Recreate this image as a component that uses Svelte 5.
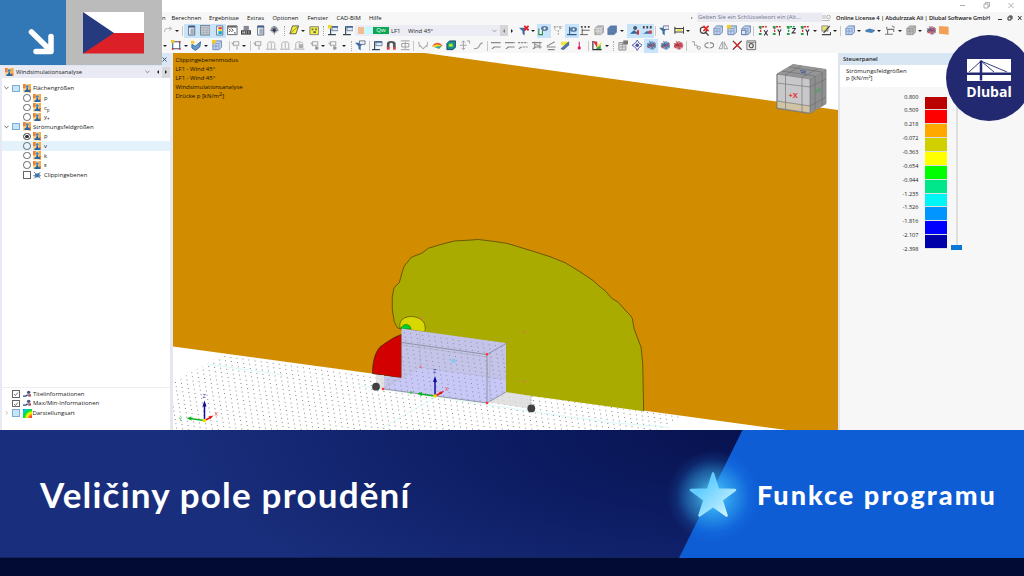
<script>
  const row1 = [
    ['redo', 168], ['caret', 177], ['sep', 182], ['panel', 191, 1], ['table', 205, 1], ['color', 219, 1], ['console', 232.5], ['rec', 246], ['panel', 260], ['globe', 274], ['dots', 285],
    ['shape', 294], ['caret', 303.5], ['ygrid', 314], ['dots', 324], ['flag', 333], ['frame', 348], ['combo', 431.5], ['arrow', 512],
    ['filterx', 524], ['caret', 533], ['eyeg', 543.8, 1], ['forces', 558], ['eyeb', 572, 1], ['load', 585], ['cubeg', 599], ['cubeb', 612], ['caret', 622],
    ['person', 634, 1], ['values', 647.7, 1], ['sep', 656], ['key', 664], ['dims', 679], ['caret', 688], ['zoomx', 704], ['box', 718], ['boxy', 732], ['boxes', 746], ['sep', 754],
    ['axx', 763], ['axy', 777], ['axz', 791], ['axm', 805], ['caret', 815], ['clip', 826], ['caret', 835.5], ['sep', 841],
    ['layers', 850], ['caret', 859], ['slab', 870], ['caret', 879.5], ['beam', 890], ['caret', 900], ['wall', 911], ['caret', 920], ['mesh', 931], ['orange', 944]
  ];
  const row2 = [
    ['caret', 165], ['select', 176], ['caret', 186], ['surf', 196], ['caret', 206], ['boxy', 217], ['sep', 229], ['pin', 235.5], ['caret', 244], ['sep', 250],
    ['pin', 257], ['sup', 271.5], ['sup', 285], ['supb', 299.5], ['pinb', 314], ['caret', 323], ['pinb', 332], ['caret', 344], ['dots', 351],
    ['filter', 360.5], ['sep', 369], ['frame', 377.5], ['magnet', 391.5], ['compress', 405], ['sep', 413.5], ['vee', 423], ['rain', 437.5], ['cubec', 451], ['updown', 464.5], ['line', 478.5], ['sep', 487],
    ['diag', 496], ['diag', 510], ['diagd', 523.5], ['diagx', 537.5], ['diagl', 551], ['brush', 565], ['drop', 579], ['sep', 588], ['chart', 597], ['caret', 606.5], ['dots', 613],
    ['report', 623], ['target', 637], ['mesh2', 651, 1], ['mesh2', 665], ['meshr', 678.5], ['sep', 687], ['steps', 696], ['rotate', 709.5], ['mirror', 723], ['cross', 737.5], ['camera', 751.5]
  ];
  function place(list) {
    let end = 162;
    return list.map(([kind, c, on]) => {
      const w = kind === 'combo' ? 153 : kind === 'caret' ? 4 : kind === 'sep' || kind === 'dots' ? 2 : kind === 'arrow' ? 3 : on ? 13.6 : 10;
      const m = c - w / 2 - end;
      end = c + w / 2;
      return { kind, w, m, on };
    });
  }
  const bars = [place(row1), place(row2)];
  const menu = ['Berechnen', 'Ergebnisse', 'Extras', 'Optionen', 'Fenster', 'CAD-BIM', 'Hilfe'];
  const menuW = [37.5, 38, 25.5, 35, 29, 32.5, 20];
  const tree = [
    { t: 'Flächengrößen', g: 1 }, { t: 'p' }, { t: 'c', s: 'p' }, { t: 'y', s: '+' },
    { t: 'Strömungsfeldgrößen', g: 1 }, { t: 'p', sel: 1 }, { t: 'v', hl: 1 }, { t: 'k' }, { t: 'ε' }
  ];
  const titles = ['Clippingebenenmodus', 'LF1 - Wind 45°', 'LF1 - Wind 45°', 'Windsimulationsanalyse'];
  const scale = ['0.800', '0.509', '0.218', '-0.072', '-0.363', '-0.654', '-0.944', '-1.235', '-1.526', '-1.816', '-2.107', '-2.398'];
  const colors = ['#bb0000', '#ff0000', '#ffa800', '#d0d000', '#ffff00', '#00ff00', '#00e68a', '#00f5f5', '#0095ff', '#0000ff', '#0000a8'];
  let floor = '';
  for (let a = -30; a < 95; a++) {
    for (let b = -30; b < 60; b++) {
      const x = 175 + 6.05 * a + 5.4 * b;
      const y = 382 + 0.86 * a - 3.35 * b;
      if (x > 172 && x < 690 && y > 320 && y < 431) floor += `M${x.toFixed(1)} ${y.toFixed(1)}h1v1h-1z`;
    }
  }
  const contour = 'M643.7 411.300 642.700 363 641 347 638.300 340 634 328.300 632.300 318.300 630 315 625 310 618.300 302.300 611.700 298.300 605 290.700 599 286 593.300 280.700 578.300 270.700 565 262.700 550 256.700 533.300 251.300 506.700 243.300 493.300 241.300 478.300 239.500 466.700 240.300 454.300 241 440 244.700 428.300 248.300 421.700 253.300 411.700 257 404.300 266 402.300 271.700 399.300 282.700 394 287.700 392.300 296.700 392.300 310 394.300 321.700 397.300 327.700 401.500 329.300';
</script>

{#snippet wind()}
  <svg class="wind" viewBox="0 0 9 9"><rect width="9" height="9" fill="#f9d489" /><path d="M0 0h2.800v4.500H0zM6.200 5H9v4H6.200z" fill="#f08038" /><path d="M6.200 0H9v5H6.200z" fill="#f6ab4a" /><path d="M1.500 8.500V7l1.700-.6.8-2.400h1l.8 2.400 1.700.6v1.500z" fill="#2467a8" /><circle cx="4.500" cy="2.700" r="1.500" fill="#3f86bd" /></svg>
{/snippet}

{#snippet icon(k)}
  <svg viewBox="0 0 12 12" class="ic">
    {#if k === 'redo'}<path d="M2 8V6q0-2 3-2h4M7 2l3 2-3 3" fill="none" stroke="#aaa" />
    {:else if k === 'panel'}<path d="M3 1h7v10.500H3z" fill="#fff" stroke="#4e5d78" /><path d="M3 1h7v2H3z" fill="#405d8d" /><path d="M5 4h4v7H5z" fill="#a2adbd" />
    {:else if k === 'table'}<path d="M.5.500h11v11H.5z" fill="#c4cad3" stroke="#6f7781" /><path d="M1 3h10M1 6h10M1 8.500h10M4 3v8M8 3v8" stroke="#9ba3ac" stroke-width=".6" />
    {:else if k === 'color'}<path d="M3 1h7v10.500H3z" fill="#fff" stroke="#59687e" /><path d="M5 2.500h4V5H5z" fill="#e43b2c" /><path d="M5 5h4v2H5z" fill="#eee321" /><path d="M5 7h4v3.500H5z" fill="#13a9d6" />
    {:else if k === 'console'}<path d="M.5 1h11v10H.5z" fill="#fff" stroke="#555" /><path d="M1 1h10v2H1z" fill="#666" /><path d="m2 4 2 2-2 2m3-4 2 2-2 2m3 1h2" fill="none" stroke="#333" />
    {:else if k === 'rec'}<path d="M3 1h6v5H3z" fill="#889" /><path d="M0 6h12v5H0z" fill="#444" /><path d="M2 7v3m2-3v3M2 8.500h2M6 7v3m3-3v3" stroke="#eee" stroke-width=".7" />
    {:else if k === 'globe'}<circle cx="6" cy="5" r="4" fill="#a5acb3" /><path d="M1 6h10M6 1v10M3 4h6" stroke="#666f78" /><circle cx="6" cy="6" r="1.800" fill="#334" />
    {:else if k === 'shape'}<path d="M4 1h7L8 10H1z" fill="#f6ef28" stroke="#555" /><path d="M1 10 11 1" stroke="#666" stroke-width=".8" />
    {:else if k === 'ygrid'}<path d="M1 2h10v9H1z" fill="#f4ee3a" stroke="#777" /><path d="M3 4h2v2H3zm4 0h2v2H7zM5 7h3v2H5z" fill="#666" />
    {:else if k === 'flag' || k === 'frame'}<path d="M3 11V2h8M0 11h9" fill="none" stroke="#34475d" stroke-width="1.300" /><path d="M4.500 2h7v4.500h-7z" fill="#dfe7f2" stroke="#4b658c" stroke-width=".8" /><path d="M4.500 1.500h7v1.500h-7z" fill="#375f99" />{#if k === 'flag'}<path d="M0 0h4v4H0z" fill="#f4d51b" />{/if}
    {:else if k === 'filter' || k === 'filterx' || k === 'key'}<path d="M0 3h10L6.500 7v5L4 10V7z" fill="#3c6eaa" />{#if k === 'filterx'}<path d="m6 1 5 5m0-5-5 5" stroke="#e22129" stroke-width="2.200" />{:else}<path d="M5 1h6.500v4H5z" fill="#eef" stroke="#456" stroke-width=".8" />{/if}
    {:else if k === 'eyeg'}<path d="M1 4v7h4V6" fill="#fff" stroke="#278750" stroke-width="1.300" /><ellipse cx="7.500" cy="4" rx="4" ry="2.800" fill="#5b7599" /><circle cx="7.500" cy="4" r="1.300" fill="#dff" />
    {:else if k === 'eyeb'}<path d="M3 11V2M0 11h11" stroke="#345a86" stroke-width="1.300" /><ellipse cx="7.500" cy="5" rx="4" ry="2.800" fill="#53749d" /><circle cx="7.500" cy="5" r="1.200" fill="#dff" />
    {:else if k === 'forces'}<path d="M1 2h10M2 2v3l2 2m4-5v3l2-2M6 6v5" fill="none" stroke="#888" stroke-dasharray="2 1" />
    {:else if k === 'load'}<path d="M2.500 4v7M0 11h9M2 6h9" stroke="#555" fill="none" /><path d="M1 1h2v2H1zm4 0h2v2H5zm4 0h2v2H9z" fill="#444" />
    {:else if k === 'cubeg' || k === 'cubeb' || k === 'box' || k === 'boxy' || k === 'boxes' || k === 'layers' || k === 'wall'}
      <path d="m1 4 3-3h7v7l-3 3H1z" fill={k === 'cubeg' || k === 'wall' ? '#bbb' : k === 'cubeb' ? '#5278a7' : '#c2d3ed'} stroke={k === 'cubeg' || k === 'wall' ? '#999' : '#6685b4'} /><path d="M1 4h7v7m0-7 3-3M4.500 4v7M1 7h7" fill="none" stroke={k === 'cubeg' ? '#eee' : k === 'wall' ? '#888' : '#6f8dba'} stroke-width=".7" />{#if k === 'boxy'}<path d="M0 0h4.500v4H0z" fill="#f3cc2c" />{/if}{#if k === 'boxes'}<path d="M.5 6h5v5h-5z" fill="#dfe8f7" stroke="#556fa3" />{/if}
    {:else if k === 'person'}<path d="M0 10c3 0 3-3 6-4l5 4z" fill="#3164a3" /><circle cx="7" cy="3.500" r="2.300" fill="#4e5870" /><path d="M9 6h3v5H9z" fill="#d93131" />
    {:else if k === 'values'}<path d="M1 1h2v3H1zm4 0h2v3H5zm4 0h2v3H9z" fill="#444" /><path d="M0 10q3 0 5-3h6v3z" fill="#3e6ba5" /><circle cx="9.500" cy="8" r="2" fill="#db4646" />
    {:else if k === 'dims'}<path d="M1 2v8m10-8v8M1 4h10M1 8h10" stroke="#444" stroke-width="1.300" /><path d="M3 5h6v2H3z" fill="#eadc38" />
    {:else if k === 'zoomx'}<circle cx="5" cy="6" r="3.500" fill="#fff" stroke="#444" stroke-width="1.400" /><path d="m7 8 4 4" stroke="#444" stroke-width="1.600" /><path d="m5 1 6 6m0-6L5 7" stroke="#e52a2a" stroke-width="2" />
    {:else if k === 'axx' || k === 'axy' || k === 'axz' || k === 'axm'}<path d="M3 2v9M1 2h9" fill="none" stroke={k === 'axz' ? '#239c46' : '#d62f2f'} stroke-width="1.500" stroke-dasharray="2.500 1" /><path d="M1 1h3v3H1zM1 9h3v2.500H1z" fill="#249f4b" /><path d={k === 'axx' ? 'm7 6 4 6m0-6-4 6' : k === 'axz' ? 'M7 4h4L7 9h4' : 'm6.500 5 2 3 2-3M8.500 8v4'} fill="none" stroke="#334" stroke-width="1.200" />
    {:else if k === 'clip'}<path d="M1 1h7v6H1z" fill="#e7e36c" stroke="#889" /><path d="m3 9 7-8M1 11h10V8" fill="none" stroke="#444" stroke-width="1.400" />
    {:else if k === 'slab'}<path d="m0 6 5-2 7 2-4 3-7-1z" fill="#4982b4" />
    {:else if k === 'beam'}<path d="M0 10.500h9M3 10V5h7v3M2 2v3M8 1l3 2" fill="none" stroke="#777" stroke-width="1.200" />
    {:else if k === 'mesh' || k === 'mesh2' || k === 'meshr'}<path d="m2 4 5-3 4 3v5l-5 2-5-3z" fill={k === 'mesh2' ? '#7c9fc6' : '#cf7f92'} /><path d="m1 4 10 4M1 8l9-5M4 1l4 10M1 6h11" stroke={k === 'meshr' ? '#a22' : '#395d87'} stroke-width=".8" /><path d="M2 9l9-5" stroke="#db3a43" />
    {:else if k === 'orange'}<path d="m0 1 11 1v9L0 10z" fill="#f3a057" />
    {:else if k === 'select'}<path d="M2 2h8v8H2z" fill="#fff" stroke="#345a8b" stroke-width="1.200" /><path d="M9 1h2v2H9zM1 9h2v2H1zm8 0h2v2H9z" fill="#d33" /><path d="M0 0h4v3.500H0z" fill="#f0c92b" />
    {:else if k === 'surf'}<path d="m1 5 4 2 6-5-1 6-5 4-4-3z" fill="#5f9ccc" stroke="#386493" /><path d="M0 1h4v3H0z" fill="#f3cd1d" />
    {:else if k === 'pin' || k === 'pinb'}<path d="M4 2h6v4H4zM8 6v5M2 3l3 4" fill="none" stroke="#aaa" stroke-width="1.200" />{#if k === 'pinb'}<circle cx="9" cy="9" r="2" fill="#999" />{/if}
    {:else if k === 'sup' || k === 'supb'}<path d="M2 10V4q0-2 4-2t4 2v6M6 3v7M0 10.500h12" fill="none" stroke="#aaa" />{#if k === 'supb'}<circle cx="8" cy="7" r="2.300" fill="#aaa" />{/if}
    {:else if k === 'magnet'}<path d="M1 10V4q0-3 5-3t5 3v6H8V5q0-2-2-2T4 5v5z" fill="#555" /><path d="M1 8h3v3H1zm7 0h3v3H8z" fill="#d44" />
    {:else if k === 'compress'}<path d="M1 1h10M1 11h10M2 4h8v4H2zM6 2v8" fill="none" stroke="#999" />
    {:else if k === 'vee'}<path d="M1 2v3l5 5 5-5V2M1 8l2-2m8 2L9 6" fill="none" stroke="#aaa" stroke-width="1.200" />
    {:else if k === 'rain'}<path d="M0 7q5-7 12-1L8 10z" fill="#e85a32" /><path d="M0 7q6-4 12 0l-4 3z" fill="#f2d82c" /><path d="M3 8l8-1.500L8 10z" fill="#20a8c1" />
    {:else if k === 'cubec'}<path d="m1 4 3-3h7v7l-3 3H1z" fill="#188b94" stroke="#194466" /><path d="M3 4h5v4H3z" fill="#53d53b" /><path d="M4 5h3v2H4z" fill="#f9df22" />
    {:else if k === 'updown'}<path d="M5 1v10M3 3l2-2 2 2M3 9l2 2 2-2M1 6h8m0-5h3v3" fill="none" stroke="#999" />
    {:else if k === 'line'}<path d="M1 10q5 0 6-3t4-4" fill="none" stroke="#999" stroke-width="1.400" />
    {:else if k === 'diag' || k === 'diagd' || k === 'diagx' || k === 'diagl'}<path d={k === 'diagl' ? 'M1 8h10M1 7l9-5M2 11h8' : 'M0 3h11M2 9l2-1h7M1 10l3-2'} fill="none" stroke="#888" stroke-width="1.300" stroke-dasharray={k === 'diagd' ? '2.500 1' : 'none'} />{#if k === 'diagx'}<path d="M3 2v8m6-8v8M3 5l6 2" stroke="#888" />{/if}
    {:else if k === 'brush'}<path d="M1 2h9v4H1z" fill="#f0e63b" /><path d="m1 10 9-8v4L4 11z" fill="#5277b9" stroke="#345" stroke-width=".6" />
    {:else if k === 'drop'}<path d="M5.300 2h1.500v6H5.300z" fill="#dc4b98" /><circle cx="6" cy="9" r="1.800" fill="#dc174f" />
    {:else if k === 'chart'}<path d="m1 1 5 8V2z" fill="#df3137" /><path d="m4 9 7-7-1 5z" fill="#e7df35" /><path d="m5 9 5-3v5H5z" fill="#3caa56" /><path d="M1 1v10h10" fill="none" stroke="#333" stroke-width="1.300" />
    {:else if k === 'report'}<path d="M1 3h8v8.500H1z" fill="#ddd" stroke="#888" /><path d="M2 5h6M2 8h6M5 3v8" stroke="#888" stroke-width=".7" /><path d="M6 .5h6V5H6z" fill="#777" />
    {:else if k === 'target'}<path d="m6 0 2 3.500L12 6 8 8.500 6 12 4 8.500 0 6l4-2.500z" fill="#f6f7ff" stroke="#484fa0" /><circle cx="6" cy="6" r="2" fill="#4b4e91" />
    {:else if k === 'steps'}<path d="M1 2h3v4h3v3" fill="none" stroke="#999" /><circle cx="9" cy="9" r="1.700" fill="none" stroke="#999" />
    {:else if k === 'rotate'}<ellipse cx="6" cy="6" rx="5" ry="3" fill="none" stroke="#888" stroke-width="1.200" /><path d="M6 1v10" stroke="#f8f8f8" stroke-width="1.500" />
    {:else if k === 'mirror'}<path d="M5 2v8H1zM7 2v8h4z" fill="none" stroke="#999" />
    {:else if k === 'cross'}<path d="m1 1 10 10M11 1 1 11" stroke="#333" stroke-width="1.300" /><path d="m2.500 2.500 7 7m0-7-7 7" stroke="#e12222" stroke-width="1.300" />
    {:else if k === 'camera'}<path d="M1 1h10v10H1z" fill="#eee" stroke="#666" /><circle cx="6" cy="6.500" r="2.300" fill="none" stroke="#555" stroke-width="1.300" /><path d="M2 3h8" stroke="#777" />
    {/if}
  </svg>
{/snippet}

<main>
  <section class="app">
    <div class="titlebar"><svg width="54" height="10" viewBox="0 0 54 10"><path d="M0 5.500h5M24 4h4v4h-4zM25.500 4V2.500h4v4H28M48.500 3l5 5m0-5-5 5" fill="none" stroke="#999" stroke-width=".8" /></svg></div>
    <div class="menubar">
      <span class="clipn">n</span>
      {#each menu as m, i}<span class="mi" style:width={menuW[i] + 'px'}>{m}</span>{/each}
      <div class="search"><i></i><span>Geben Sie ein Schlüsselwort ein (Alt...</span></div>
      <svg class="find" viewBox="0 0 10 8"><path d="M0 2h4M0 4h4M0 6.500h8" stroke="#aaa" stroke-width=".8" /><circle cx="6.500" cy="3" r="1.800" fill="none" stroke="#999" stroke-width=".7" /></svg>
      <b class="license">Online License 4 | Abdulrzzak Ali | Dlubal Software GmbH</b>
      <svg class="wctl" viewBox="0 0 26 8"><path d="M1 5.500h4M11 3h3v3h-3zM12 2h3v3M21 2l3.500 4m0-4L21 6" fill="none" stroke="#333" /></svg>
    </div>
    {#each bars as bar}
      <div class="toolbar">
        {#each bar as b}
          <div class="slot" class:on={b.on} style:width={b.w + 'px'} style:margin-left={b.m + 'px'}>
            {#if b.kind === 'combo'}
              <div class="combo"><i class="sw1"></i><i class="sw2"></i><em>Qw</em><span class="lf">LF1</span><span>Wind 45°</span><svg class="chev" viewBox="0 0 6 4"><path d="m.5.500 2.500 2.500L5.500.5" fill="none" stroke="#777" stroke-width=".8" /></svg><u class="prev"><i class="tri back"></i></u></div>
            {:else if b.kind === 'caret'}<i class="caret"></i>
            {:else if b.kind === 'sep'}<i class="sep"></i>
            {:else if b.kind === 'dots'}<i class="sep dotted"></i>
            {:else if b.kind === 'arrow'}<i class="tri"></i>
            {:else}{@render icon(b.kind)}{/if}
          </div>
        {/each}
      </div>
    {/each}
    <div class="work">
      <aside class="nav">
        <div class="navhead"><svg viewBox="0 0 5 5"><path d="m.5.500 4 4m0-4-4 4" stroke="#345" stroke-width=".9" /></svg></div>
        <div class="picker">{@render wind()}<span>Windsimulationsanalyse</span><svg class="chev" viewBox="0 0 6 4"><path d="m.5.500 2.500 2.500L5.500.5" fill="none" stroke="#666" stroke-width=".9" /></svg><i class="tri left"></i><u><i class="tri"></i></u></div>
        <div class="tree">
          {#each tree as n}
            <div class="node" class:group={n.g} class:hl={n.hl}>
              {#if n.g}<svg class="exp" viewBox="0 0 6 4"><path d="m.5.500 2.500 2.500L5.500.5" fill="none" stroke="#444" /></svg><i class="box blue"></i>{:else}<i class="radio" class:sel={n.sel}></i>{/if}
              {@render wind()}<span>{n.t}{#if n.s}<sub>{n.s}</sub>{/if}</span>
            </div>
          {/each}
          <div class="node"><i class="box"></i><svg class="wind" viewBox="0 0 9 9"><path d="m2 3 5-1v4.500L2 7z" fill="#4b7fb3" /><path d="m1 1 7 7M1 8l7-7M0 5h9" stroke="#4c7299" stroke-width=".8" /></svg><span>Clippingebenen</span></div>
        </div>
        <div class="options">
          {#each ['Titelinformationen', 'Max/Min-Informationen'] as t}
            <div class="node opt"><i class="box"><svg viewBox="0 0 8 8"><path d="m1.500 4 1.800 2L6.500 2" fill="none" stroke="#333" stroke-width=".9" /></svg></i><svg class="wind" viewBox="0 0 9 9"><path d="M0 6.500h3L5 5" fill="none" stroke="#254c8a" stroke-width="1.500" /><circle cx="6" cy="2.500" r="1.800" fill="#4b5380" /><path d="M5.500 4.500h3.500v2.500H5.500z" fill="#b8475a" /></svg><span>{t}</span></div>
          {/each}
          <div class="node group"><svg class="exp" viewBox="0 0 6 6"><path d="M2 .5 4.500 3 2 5.500" fill="none" stroke="#888" stroke-width=".9" /></svg><i class="box blue"></i><i class="rainbow"></i><span>Darstellungsart</span></div>
        </div>
      </aside>
      <div class="view">
        <svg viewBox="173 53 665 377" width="665" height="377">
          <defs>
            <clipPath id="ground"><path d="M173 383 224 353.500 683 417 664 430H173z" /></clipPath>
            <clipPath id="solid"><path d="M401.500 328.500 506 343v49l-19 11-103-14v-13l17.500 2z" /></clipPath>
          </defs>
          <path d="M173 53H425L838 110V437L173 346.500z" fill="#d18c00" />
          <path d={floor} fill="#8a8a8a" clip-path="url(#ground)" />
          <path d="m207 364 76 11M380 429l56-32 120 18 60 8 50 4M361 386l75 11" stroke="#d3f5f5" stroke-width=".8" fill="none" />
          <path d="{contour}V378z" fill="#aaab00" />
          <path d={contour} fill="none" stroke="#554800" stroke-width=".8" stroke-linejoin="round" />
          <path d="M400 328c-3-16 24-14 25-2q1 6-2 6z" fill="#d8d800" stroke="#574b00" stroke-width=".7" /><path d="M401 329q1-5 6-4.500 4 1 4 4.500z" fill="#00d22c" stroke="#266100" stroke-width=".5" />
          <path d="M401.500 334.500c-9 3-15 8-21 12-6 6-8 17-8 27l29 4.500z" fill="#d20000" stroke="#402500" stroke-width=".7" />
          <path d="M376 375h8v14l-8-1zM487 402l19-10 25 4v13z" fill="#d9d9d9" opacity=".8" />
          <path d="M401.500 328.500 506 343v49l-19 11-103-14v-13l17.500 2z" fill="#c4c4e8" />
          <path d="m383 389 37-23 86 12v14l-19 11z" fill="#c8c8f6" />
          <path d={floor} fill="#8c8cb0" clip-path="url(#solid)" />
          <path d="m401.500 342.500 85.500 12 19-11M487 354v49l19-11M487 403l-103-14" fill="none" stroke="#777b87" stroke-width=".7" />
          <path d="m383 389 37-22 86 12M420 331v36M401.500 345l85.500 12M490 355v47" fill="none" stroke="#aaa9b9" stroke-width=".5" /><path d="M531 396v12" stroke="#999" stroke-width=".7" stroke-dasharray="2 1" />
          <g fill="#f33"><circle cx="487" cy="354.300" r="1.300" /><circle cx="487" cy="403" r="1.300" /><circle cx="383" cy="389" r="1.300" /></g>
          <g fill="#f45d74"><circle cx="420.500" cy="318.500" r="1" /><circle cx="524" cy="332.500" r="1" /><circle cx="524" cy="381.500" r="1" /><circle cx="420.500" cy="367" r="1" /></g>
          <circle cx="453.500" cy="361" r="2.300" fill="#8ec6f4" /><circle cx="376" cy="386.700" r="3.900" fill="#414141" /><circle cx="531.300" cy="408.400" r="3.900" fill="#414141" />
          {#each [{ x: 435, y: 396 }, { x: 204.5, y: 420.5, yl: 1 }] as a}
            <g transform="translate({a.x} {a.y})"><path d="M0 0v-17" stroke="#100c9c" stroke-width="1.500" /><path d="m-2-14 2-6 2 6z" fill="#100c9c" /><path d="m0 0-15-2" stroke="#0cb51f" stroke-width="1.300" /><path d="m-13-4-5 1.700 5 2.300z" fill="#0cb51f" /><path d="m0 0 6-3" stroke="#e11" stroke-width="1.500" /><path d="m4-4 5-1-3 3.500z" fill="#e11" /><circle r="1.800" fill="#f9d900" /><text x="-2" y="-23" fill="#3530a0">Z</text><text x="10" y="-5" fill="#e44">X</text>{#if a.yl}<text x="-26" y="0" fill="#16b72c">Y</text>{:else}<circle cx="-24" cy="-3.500" r="1.300" fill="#3cc24a" />{/if}</g>
          {/each}
          <path d="m777 74 16-9.500 33 5v34l-16 10-33-5z" fill="#c8c8ca" stroke="#777" stroke-width=".8" /><path d="m777 74 16-9.500 33 5-16 9z" fill="#969698" /><path d="m810 79 16-9v34l-16 9z" fill="#8e8e8e" /><path d="m777 101 33 5v7l-33-5z" fill="#d0c3a6" />
          <path d="m777 74 33 5v34l-33-5zM810 79l16-9M785.500 75v34M802 77.500v35M777 83l33 4M777 101l33 5M815 76v34M822 72v34M810 87l16-8M810 106l16-9M785 75l16-9M802 77.500l16-9M782 71l33 5M789 67l33 5" fill="none" stroke="#6c6c6c" stroke-width=".6" /><text class="cube" x="788.500" y="97.500" fill="#e33434">+X</text><text class="side" x="815" y="94" fill="#31a647" transform="rotate(-22 815 94)">+Y</text><path d="M800 70.500l6 1M801 72.500l5 .5" stroke="#4a5a9a" />
        </svg>
        <div class="labels">{#each titles as t}<p>{t}</p>{/each}<p>Drücke p [kN/m<sup>2</sup>]</p></div>
      </div>
      <aside class="control">
        <div class="chead">Steuerpanel</div><div class="cdesc">Strömungsfeldgrößen<br />p [kN/m²]</div>
        <div class="legend"><div class="nums">{#each scale as s}<span>{s}</span>{/each}</div><div class="colors">{#each colors as c}<i style:background={c}></i>{/each}</div><div class="track"><i></i></div></div>
      </aside>
    </div>
  </section>
  <footer>
    <h1>Veličiny pole proudění</h1>
    <div class="feature">
      <svg class="slant" width="345" height="128" viewBox="0 0 345 128"><defs><radialGradient id="glow"><stop offset=".2" stop-color="#4ccfff" stop-opacity=".75" /><stop offset=".55" stop-color="#38b4f5" stop-opacity=".45" /><stop offset=".8" stop-color="#2aa6ff" stop-opacity=".12" /><stop offset="1" stop-color="#2aa6ff" stop-opacity="0" /></radialGradient><linearGradient id="star" x2="1" y2="1"><stop offset=".3" stop-color="#62ceff" /><stop offset="1" stop-color="#dcf8ff" /></linearGradient></defs><path d="M63.500 0H345v128H0z" fill="#0e5dd5" /><circle cx="34" cy="66" r="46" fill="url(#glow)" /><path d="m34 43.500 5 16 17 .5-13.500 10 5 15.500L34 76l-13.500 9.500 5-15.500L12 60l17-.5z" fill="url(#star)" stroke="url(#star)" stroke-width="2.500" stroke-linejoin="round" /></svg>
      <h2>Funkce programu</h2>
    </div>
  </footer>
  <div class="corner"><div class="tile"><svg width="65" height="65" viewBox="0 0 65 65"><path d="M31.500 32 51 51M51 36.500V51.500H36" fill="none" stroke="#fff" stroke-width="5.500" stroke-linecap="round" stroke-linejoin="round" /></svg></div><div class="flag"><svg width="62" height="42" viewBox="0 0 62 42"><path d="M0 0h61v21H0z" fill="#fff" /><path d="M0 21h61v20.500H0z" fill="#dc2028" /><path d="M0 0v41.500L31 21z" fill="#263a80" /></svg></div></div>
  <div class="brand"><svg width="44" height="22" viewBox="0 0 44 22"><path d="M0 0h44v13.500H0zM0 16h44v6H0z" fill="#fff" /><path d="M14 1.500v20" stroke="#242a70" stroke-width="2.500" /><path d="M2 13 14 2l13 11M14 2l26 11" stroke="#242a70" stroke-width=".9" fill="none" /></svg><b>Dlubal</b></div>
</main>

<style>
  :global(body) { margin: 0; overflow: hidden; }
  * { box-sizing: border-box; }
  main { width: 1024px; height: 576px; position: relative; display: flex; flex-direction: column; overflow: hidden; background: #020b33; font-family: 'Open Sans', sans-serif; color: #222; }
  svg { display: block; flex: none; }
  i { display: block; flex: none; }
  .app { height: 430px; display: flex; flex-direction: column; background: #fff; font-size: 5.95px; line-height: 8px; }
  .titlebar { height: 12px; display: flex; justify-content: flex-end; padding-right: 10px; }
  .menubar { height: 11px; display: flex; align-items: center; background: #f7f7f7; color: #111; padding-left: 162px; white-space: nowrap; font-size: 5.9px; }
  .clipn { width: 9.5px; flex: none; }
  .mi { flex: none; }
  .search { width: 131px; height: 9px; flex: none; display: flex; align-items: center; gap: 4px; margin-left: 302px; color: #70748a; font-size: 5.95px; }
  .search i { border-left: 2px solid #777; border-top: 1.5px solid transparent; border-bottom: 1.5px solid transparent; }
  .search span { flex: 1; background: #eaeaf3; height: 9px; line-height: 9px; padding-left: 1px; }
  .find { width: 10px; height: 8px; margin-left: 0; }
  .license { margin-left: 4px; width: 157px; flex: none; font-size: 5.7px; font-weight: 600; letter-spacing: -.08px; }
  .wctl { width: 26px; height: 8px; margin-left: 4px; }
  .toolbar { height: 15px; display: flex; align-items: center; background: #f7f7f7; padding-left: 162px; }
  .slot { height: 14px; display: flex; flex: none; justify-content: center; align-items: center; }
  .on { background: #c8e4fa; }
  .ic { width: 10.5px; height: 10.5px; }
  .caret { border-top: 2px solid #222; border-left: 2px solid transparent; border-right: 2px solid transparent; }
  .sep { width: 1px; height: 10px; background: #c8c8c8; }
  .dotted { background: none; border-left: 1px dotted #aaa; }
  .tri { border-left: 2.5px solid #222; border-top: 2px solid transparent; border-bottom: 2px solid transparent; }
  .tri.left { transform: rotate(180deg); margin-left: 4px; }
  .tri.back { transform: rotate(180deg); border-left-color: #777; }
  .combo { width: 153px; flex: none; height: 11px; display: flex; align-items: center; background: #ececf4; color: #222; padding-left: 3px; }
  .sw1 { width: 6px; height: 7px; background: #efbd91; }
  .sw2 { width: 7px; height: 7px; background: #c3fafa; margin-left: 1px; }
  em { width: 16px; height: 7px; background: #09a653; color: #fff; font-style: normal; text-align: center; line-height: 7px; margin-left: 1px; }
  .lf { margin-left: 2px; width: 17px; }
  .chev { width: 5px; height: 4px; margin-left: auto; }
  .prev { display: flex; align-items: center; justify-content: center; height: 11px; width: 8px; margin-left: 3px; background: #d5d5d8; }
  .work { height: 377px; display: flex; }
  .nav { width: 173px; display: flex; flex-direction: column; background: #fff; border-right: 3px solid #e5e7ef; border-left: 2px solid #e7eaf2; }
  .navhead { height: 13px; background: #d9e6f5; display: flex; align-items: center; justify-content: flex-end; padding-right: 3px; }
  .navhead svg { width: 5px; height: 5px; }
  .picker { height: 12px; display: flex; align-items: center; gap: 2.5px; background: #e9eaf3; padding-left: 3px; font-size: 5.85px; }
  .picker .chev { margin-right: 0; }
  .picker u { display: flex; align-items: center; justify-content: center; width: 8px; height: 11px; background: #d8d8dc; margin-left: 1px; }
  .wind { width: 8.5px; height: 8.5px; }
  .tree { padding-top: 5.5px; }
  .node { height: 9.62px; display: flex; align-items: center; padding-left: 21px; gap: 2px; white-space: nowrap; }
  .node span { padding-left: 1px; }
  .node.group { padding-left: 2px; }
  .node.group span { padding-left: 0; }
  .hl { background: #e4f2fc; }
  .exp { width: 5px; height: 4px; margin-right: 1px; }
  .box { width: 7.5px; height: 7.5px; border: 1px solid #666; background: #fff; }
  .blue { background: #c7e5fa; border-color: #7badd1; margin-right: 1px; }
  .radio { width: 7.5px; height: 7.5px; border: 1px solid #666; border-radius: 50%; }
  .sel { background: #333; box-shadow: inset 0 0 0 1px #fff; }
  .box svg { width: 6px; height: 6px; }
  sub, sup { font-size: 4.5px; line-height: 0; }
  .options { margin-top: auto; height: 43.500px; padding-top: 1.5px; border-top: 1px solid #eee; }
  .opt { padding-left: 10px; }
  .opt svg.wind { margin-left: 1px; }
  .opt span { padding-left: 0; }
  .options .group span { padding-left: 0; margin-left: -1px; }
  .rainbow { width: 9px; height: 9px; background: radial-gradient(circle at 100% 100%, #f43 15%, #ff0 40%, #0d3 62%, #0cf 85%, #05f); }
  .view { width: 665px; position: relative; background: #fff; }
  .view text { font: 6px 'Open Sans', sans-serif; }
  .view .cube { font-weight: 700; font-size: 7.5px; }
  .view .side { font-size: 5.5px; font-weight: 700; }
  .labels { position: absolute; left: 2.5px; top: 2.5px; color: #171000; }
  .labels p { margin: 0; height: 9.2px; line-height: 9px; }
  .labels sup { font-size: 5.5px; vertical-align: 2px; }
  .control { width: 186px; background: #f7f7f7; border-left: 2px solid #e1e4eb; }
  .chead { height: 12px; line-height: 12px; padding-left: 3px; background: #d8e6f4; font-weight: 600; }
  .cdesc { height: 22px; padding: 3px 6px; line-height: 7px; background: #fff; }
  .legend { display: flex; padding-top: 5.5px; }
  .nums { width: 78.500px; display: flex; flex-direction: column; text-align: right; font-size: 5.6px; }
  .nums span { height: 13.87px; line-height: 9px; }
  .colors { margin: 4px 0 0 6px; width: 23px; height: 153.5px; display: flex; flex-direction: column; padding: 0 .5px; }
  .colors i { height: 13.87px; border-bottom: 1px solid #ddd; }
  .track { width: 2px; height: 152px; margin: 4px 0 0 8px; background: #dedede; display: flex; align-items: flex-end; }
  .track i { width: 11px; height: 5px; flex: none; background: #0877d8; margin-left: -5px; margin-bottom: -1px; }
  footer { height: 128px; flex: none; display: flex; align-items: center; justify-content: space-between; background: radial-gradient(ellipse 560px 210px at 740px 0, #08124f 0, #0c1b61 40%, #192e7c 100%); border-bottom: 1px solid #142458; }
  h1, h2 { margin: 0; color: #fff; font-family: Lato, sans-serif; white-space: nowrap; }
  h1 { padding-left: 40px; font-size: 35px; font-weight: 700; line-height: 42px; letter-spacing: 1.2px; margin-top: 1px; }
  .feature { width: 345px; height: 128px; position: relative; display: flex; align-items: center; padding-left: 78px; }
  .slant { position: absolute; inset: 0; overflow: visible; }
  h2 { position: relative; font-size: 27px; font-weight: 900; line-height: 36px; letter-spacing: 2px; margin-top: 3px; }
  .corner { position: absolute; left: 0; top: 0; display: flex; }
  .tile { width: 66px; height: 65px; background: #3278b6; }
  .flag { width: 96px; height: 65px; padding: 12px 0 0 17px; background: #bbb; }
  .brand { position: absolute; left: 946px; top: 35px; width: 86px; height: 86px; border-radius: 50%; background: #222970; color: #fff; display: flex; flex-direction: column; align-items: center; padding-top: 24px; }
  .brand b { font-size: 14px; line-height: 21px; font-weight: 700; }
</style>
